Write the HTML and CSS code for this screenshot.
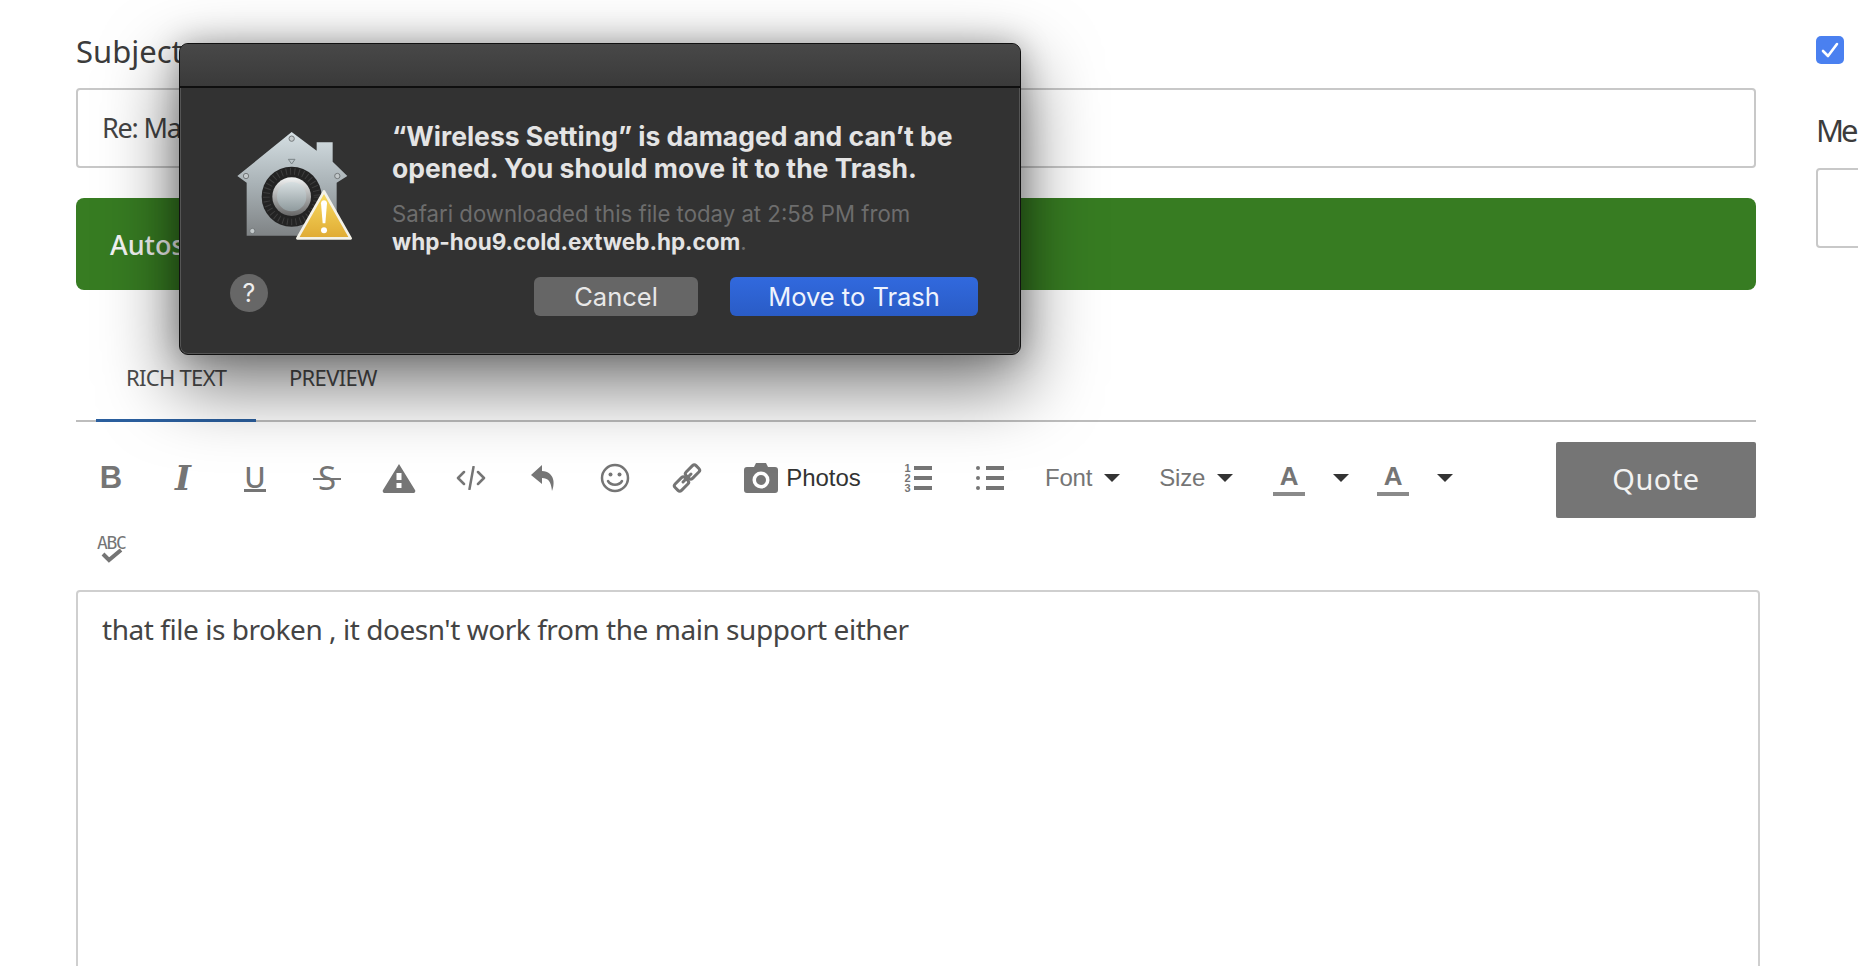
FILE: index.html
```html
<!DOCTYPE html>
<html lang="en">
<head>
<meta charset="utf-8">
<title>Reply</title>
<link rel="stylesheet" href="styles.css">
</head>
<body>
<div class="page">
  <main class="main">
    <label class="label">Subject</label>
    <div class="input">Re: Mar</div>
    <div class="notice">Autosaved</div>
    <nav class="tabs">
      <span class="tab active">RICH TEXT</span>
      <span class="tab">PREVIEW</span>
    </nav>
    <div class="toolbar">
      <div class="tools">
        <span class="tool tx-b">B</span>
        <span class="tool tx-i">I</span>
        <span class="tool"><span class="tx-u">U</span></span>
        <span class="tool"><span class="tx-s">S</span></span>
        <span class="tool"><svg width="34" height="30" viewBox="0 0 34 30"><path class="fill" d="M17 1 33 27a2 2 0 0 1-2 3H3a2 2 0 0 1-2-3Z"/><rect x="14.500" y="10" width="5" height="7" fill="#fff"/><rect x="14.500" y="20" width="5" height="5" fill="#fff"/></svg></span>
        <span class="tool"><svg width="30" height="24" viewBox="0 0 30 24"><path class="line" d="M8 6 2 12l6 6M22 6l6 6-6 6M17.500 1l-4 22"/></svg></span>
        <span class="tool"><svg width="26" height="28" viewBox="0 0 26 28"><path class="fill" d="M12 1 1 11l11 9v-6c6 0 9 3 10 13 3-7 3-19-10-20Z"/></svg></span>
        <span class="tool"><svg width="30" height="30" viewBox="0 0 30 30"><circle class="line" cx="15" cy="15" r="13"/><circle class="fill" cx="10.500" cy="11.500" r="2"/><circle class="fill" cx="19.500" cy="11.500" r="2"/><path class="line" d="M8 18c3 5 11 5 14 0"/></svg></span>
        <span class="tool"><svg width="30" height="30" viewBox="0 0 30 30"><g class="line link"><rect x="16" y="2" width="9" height="14" rx="2.500" transform="rotate(45 20.500 9)"/><rect x="5" y="14" width="9" height="14" rx="2.500" transform="rotate(45 9.500 21)"/><path d="M11 19 19 11"/></g></svg></span>
        <span class="tool tool-photos"><svg width="34" height="30" viewBox="0 0 34 30"><path class="fill" d="M3 4h7l2-4h10l2 4h7a3 3 0 0 1 3 3v20a3 3 0 0 1-3 3H3a3 3 0 0 1-3-3V7a3 3 0 0 1 3-3Z"/><circle cx="17" cy="17" r="8.500" fill="#fff"/><circle class="fill" cx="17" cy="17" r="5"/></svg><span class="photos-text">Photos</span></span>
        <span class="tool"><span class="nums"><span>1</span><span>2</span><span>3</span></span><span class="bars"><i></i><i></i><i></i></span></span>
        <span class="tool"><span class="dots"><b></b><b></b><b></b></span><span class="bars"><i></i><i></i><i></i></span></span>
        <span class="tool-text">Font<span class="caret"></span></span>
        <span class="tool-text">Size<span class="caret"></span></span>
        <span class="tool-color"><span class="tx-a">A</span><span class="caret"></span></span>
        <span class="tool-color"><span class="tx-a">A</span><span class="caret"></span></span>
        <span class="tool"><span class="abc"><span class="abc-text">ABC</span><svg class="abc-check" width="22" height="14" viewBox="0 0 22 14"><path class="check" d="M2 5l6 6L20 1"/></svg></span></span>
      </div>
      <button class="quote">Quote</button>
    </div>
    <div class="editor">that file is broken , it doesn't work from the main support either</div>
  </main>
  <aside class="side">
    <span class="checkbox"><svg width="20" height="20" viewBox="0 0 20 20"><path d="M3 11l5 5 9-12" fill="none" stroke="#fff" stroke-width="2.600" stroke-linecap="round" stroke-linejoin="round"/></svg></span>
    <div class="side-label">Me</div>
    <div class="side-box"></div>
  </aside>
</div>

<section class="dialog">
  <header class="titlebar"></header>
  <div class="dialog-body">
    <div class="dialog-left">
      <svg class="house" width="160" height="130" viewBox="0 0 480 390">
        <defs>
          <linearGradient id="metal" x1="0" y1="0" x2="0" y2="1"><stop offset="0" stop-color="#d5dfe3"/><stop offset=".5" stop-color="#a9b2b6"/><stop offset="1" stop-color="#7f8385"/></linearGradient>
          <linearGradient id="knob" x1="0" y1="0" x2="0" y2="1"><stop offset="0" stop-color="#f2f4f4"/><stop offset="1" stop-color="#666"/></linearGradient>
          <linearGradient id="face" x1="0" y1="0" x2="0" y2="1"><stop offset="0" stop-color="#d7dfe1"/><stop offset="1" stop-color="#8f9a9d"/></linearGradient>
          <linearGradient id="warn" x1="0" y1="0" x2="0" y2="1"><stop offset="0" stop-color="#f8dc63"/><stop offset="1" stop-color="#e0ab33"/></linearGradient>
        </defs>
        <path fill="url(#metal)" d="M215 36 290 92V67h48v58l44 43-32 20v159H80V188l-28-20Z"/>
        <circle cx="215" cy="230" r="90" fill="#232323"/>
        <circle cx="215" cy="230" r="76" fill="none" stroke="#3e3e3e" stroke-width="20" stroke-dasharray="3 10"/>
        <circle cx="215" cy="230" r="58" fill="url(#knob)"/>
        <circle cx="215" cy="230" r="44" fill="url(#face)"/>
        <path d="M205 118h20l-10 14Z" fill="none" stroke="#7b8487" stroke-width="3"/>
        <g fill="#c3c9cb" stroke="#74797b" stroke-width="3">
          <circle cx="215" cy="56" r="8"/><circle cx="78" cy="168" r="8"/><circle cx="352" cy="168" r="8"/><circle cx="97" cy="333" r="8"/>
        </g>
        <path fill="url(#warn)" stroke="#f4f2e8" stroke-width="8" stroke-linejoin="round" d="M312 214 392 355H232Z"/>
        <path fill="#fff" d="M303 250c0-12 18-12 18 0l-5 60h-8Z"/>
        <circle cx="312" cy="331" r="9" fill="#fff"/>
      </svg>
      <span class="help">?</span>
    </div>
    <div class="dialog-text">
      <h1 class="dialog-title">“Wireless Setting” is damaged and can’t be opened. You should move it to the Trash.</h1>
      <p class="dialog-sub">Safari downloaded this file today at 2:58 PM from<br><strong>whp-hou9.cold.extweb.hp.com</strong>.</p>
      <div class="dialog-actions">
        <button class="btn btn-cancel">Cancel</button>
        <button class="btn btn-primary">Move to Trash</button>
      </div>
    </div>
  </div>
</section>
</body>
</html>
```
FILE: styles.css
```css
* { box-sizing: border-box; }
html, body { margin: 0; height: 966px; overflow: hidden; background: #fff; }
body { font-family: "Noto Sans", sans-serif; color: #3c3c3c; }

.page { display: flex; height: 966px; overflow: hidden; padding-left: 76px; }
.main { flex: 0 0 1680px; width: 1680px; padding-top: 31px; }
.label { display: block; height: 40px; line-height: 40px; font-size: 31px; margin-bottom: 17px; }
.input { width: 1680px; height: 80px; border: 2px solid #c8c8c8; border-radius: 4px; padding-left: 24px; font-size: 27px; letter-spacing: -1.2px; line-height: 76px; color: #444; margin-bottom: 30px; }
.notice { width: 1680px; height: 92px; background: #377c22; border-radius: 8px; padding: 1px 0 0 34px; color: #f4f4f4; font-size: 27px; line-height: 92px; font-weight: 500; margin-bottom: 45px; }

.tabs { display: flex; width: 1680px; height: 87px; padding-left: 20px; border-bottom: 2px solid #bdbdbd; }
.tab { height: 87px; padding: 20px 30px 0; font-size: 22px; line-height: 44px; color: #4c4c4c; letter-spacing: -0.7px; white-space: nowrap; }
.tab.active { border-bottom: 3px solid #2b5f9e; width: 160px; }
.tab + .tab { margin-left: 3px; }

.toolbar { display: flex; justify-content: space-between; align-items: flex-start; margin-top: 21px; width: 1680px; }
.tools { display: flex; flex-wrap: wrap; width: 1441px; margin-left: -1px; }
.tool { display: flex; width: 72px; height: 70px; align-items: center; justify-content: center; color: #757575; gap: 3px; }
.tx-b { font: 700 31px "Liberation Sans", sans-serif; }
.tx-i { font: italic 700 34px "DejaVu Serif", serif; }
.tx-u { display: block; font: 500 29px/25px "Noto Sans", sans-serif; border-bottom: 3px solid #757575; }
.tx-s { position: relative; display: block; font: 400 33px/34px "Noto Sans", sans-serif; width: 28px; text-align: center; }
.tx-s::after { content: ""; position: absolute; left: 0; right: 0; top: 17px; height: 2px; background: #757575; }
.fill { fill: #757575; }
.line { fill: none; stroke: #757575; stroke-width: 2.500; stroke-linecap: round; stroke-linejoin: round; }
.link { stroke-width: 3; }
.tool-photos { width: 159px; gap: 8px; }
.photos-text { font: 400 24px "Liberation Sans", sans-serif; color: #333; }
.nums { display: flex; flex-direction: column; font: 700 11px/10px "Liberation Sans", sans-serif; }
.bars { display: flex; flex-direction: column; gap: 6px; }
.bars i { display: block; width: 18px; height: 4px; background: #757575; }
.dots { display: flex; flex-direction: column; gap: 6px; margin-right: 3px; }
.dots b { display: block; width: 4px; height: 4px; border-radius: 50%; background: #757575; }
.tool-text { display: flex; height: 70px; align-items: center; padding: 0 20px 0 19px; gap: 12px; font: 400 24px "Liberation Sans", sans-serif; letter-spacing: -0.2px; color: #757575; }
.caret { display: block; width: 0; height: 0; border-left: 8px solid transparent; border-right: 8px solid transparent; border-top: 8px solid #333; }
.tool-color { display: flex; height: 70px; width: 104px; padding: 0 8px 0 20px; align-items: center; justify-content: space-between; }
.tx-a { display: block; width: 32px; text-align: center; font: 700 26px/30px "Liberation Sans", sans-serif; color: #757575; border-bottom: 4px solid #8a8a8a; padding-bottom: 1px; }
.abc { position: relative; display: block; color: #757575; height: 28px; width: 28px; margin-top: 2px; }
.abc-text { display: block; font: 400 18px/15px "DejaVu Sans Mono", monospace; letter-spacing: -1.300px; white-space: nowrap; }
.abc-check { position: absolute; left: 4px; top: 14px; }
.check { fill: none; stroke: #757575; stroke-width: 4; }
.quote { width: 200px; height: 76px; background: #757575; color: #f2f2f2; border: 0; border-radius: 2px; font: 400 29px "Noto Sans", sans-serif; letter-spacing: 0.5px; padding-bottom: 5px; margin-top: -1px; }

.editor { margin-top: 7px; width: 1684px; height: 500px; border: 2px solid #cfcfcf; border-radius: 4px; padding: 15px 24px; font-size: 28px; letter-spacing: -0.45px; line-height: 44px; color: #444; }

.side { padding: 36px 0 0 60px; flex: 0 0 auto; }
.checkbox { display: flex; width: 28px; height: 28px; background: #4a80f0; border-radius: 5px; align-items: center; justify-content: center; }
.side-label { margin-top: 46px; font-size: 31px; letter-spacing: -3px; line-height: 40px; }
.side-box { width: 200px; height: 80px; margin-top: 18px; border: 2px solid #c8c8c8; border-radius: 4px; }

.dialog { position: absolute; left: 179px; top: 43px; width: 842px; height: 312px; background: #323232; border: 1px solid #111; border-radius: 9px; box-shadow: 0 28px 70px 6px rgba(0,0,0,.5), 0 0 30px rgba(0,0,0,.25), inset 0 0 0 1px #555; font-family: Inter, sans-serif; overflow: hidden; }
.titlebar { height: 44px; background: linear-gradient(#484848, #3a3a3a); border-bottom: 2px solid #0f0f0f; }
.dialog-body { display: flex; padding: 32px 42px 0 40px; }
.dialog-left { width: 172px; flex: 0 0 172px; }
.house { display: block; }
.help { display: flex; width: 38px; height: 38px; margin: 24px 0 0 10px; border-radius: 50%; background: #676767; color: #eee; align-items: center; justify-content: center; font-size: 25px; }
.dialog-text { flex: 1; }
.dialog-title { margin: 0; font-size: 26.500px; line-height: 32px; font-weight: 700; color: #e4e4e4; }
.dialog-sub { margin: 16px 0 0; font-size: 22.200px; line-height: 28px; color: #6d6d6d; }
.dialog-sub strong { color: #e4e4e4; font-weight: 700; font-size: 22.500px; }
.dialog-actions { display: flex; justify-content: flex-end; gap: 32px; margin-top: 21px; }
.btn { height: 39px; border: 0; border-radius: 6px; font: 400 25.500px Inter, sans-serif; color: #e8e8e8; padding: 0; }
.btn-cancel { width: 164px; background: #666; }
.btn-primary { width: 248px; background: linear-gradient(#3169de, #2a5cc6); color: #eef3fd; }
```
